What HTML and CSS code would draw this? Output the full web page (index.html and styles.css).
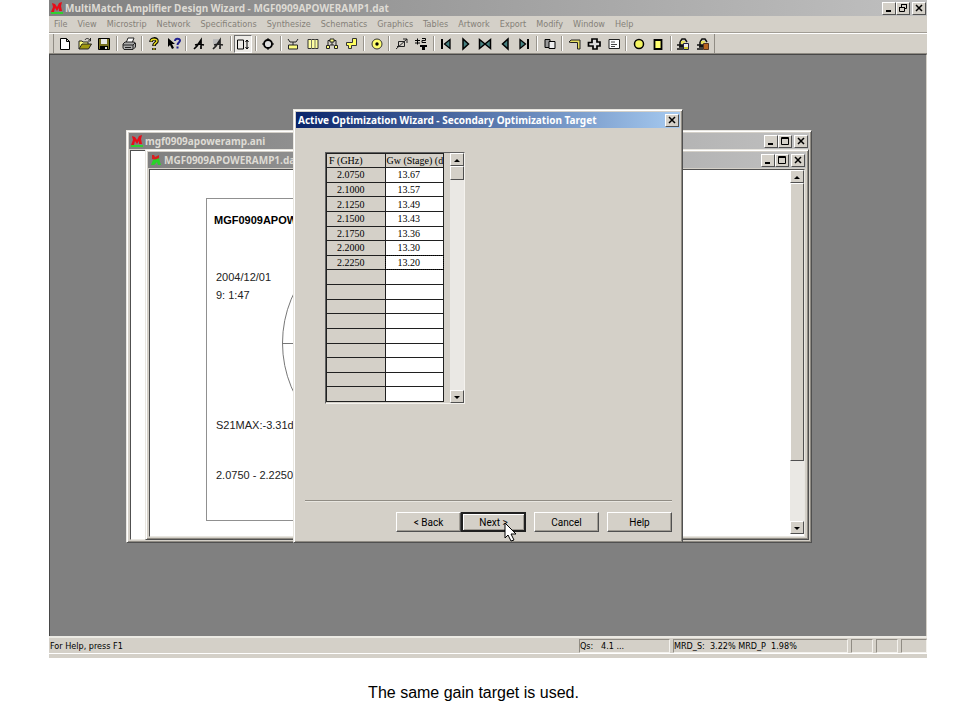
FILE: index.html
```
<!DOCTYPE html>
<html lang="en">
<head>
    <meta charset="UTF-8">
    <title>MultiMatch Amplifier Design Wizard</title>
    <link rel="stylesheet" href="styles.css">
</head>
<body>
    <div class="app">
        <!-- Main window title -->
        <header class="titlebar main-title">
            <svg class="logo" viewBox="0 0 12 12"><path d="M0 10h12v2H0z" fill="#30d030"/><path d="M1 1l3 1 2 3 2-4 3-1-1 4 1 5H8L8 6 6 9 4 6 3 10H0l2-5z" fill="#e80c18"/></svg>
            <h1>MultiMatch Amplifier Design Wizard - MGF0909APOWERAMP1.dat</h1>
            <div class="win-buttons">
                <button type="button" aria-label="Minimize"><svg viewBox="0 0 10 10"><path d="M2 8h5" stroke="#000" stroke-width="2"/></svg></button>
                <button type="button" aria-label="Restore"><svg viewBox="0 0 10 10"><path d="M3.500 4V1.500h5v4H7M3 1.500h6M1.500 4.500h5v4h-5zM1 4.500h6" fill="none" stroke="#000"/></svg></button>
                <button type="button" class="close" aria-label="Close"><svg viewBox="0 0 10 10"><path d="M2 2l6 6M8 2L2 8" stroke="#000" stroke-width="1.500"/></svg></button>
            </div>
        </header>
        <nav>
            <ul class="menu">
                <li><a href="#">File</a></li>
                <li><a href="#">View</a></li>
                <li><a href="#">Microstrip</a></li>
                <li><a href="#">Network</a></li>
                <li><a href="#">Specifications</a></li>
                <li><a href="#">Synthesize</a></li>
                <li><a href="#">Schematics</a></li>
                <li><a href="#">Graphics</a></li>
                <li><a href="#">Tables</a></li>
                <li><a href="#">Artwork</a></li>
                <li><a href="#">Export</a></li>
                <li><a href="#">Modify</a></li>
                <li><a href="#">Window</a></li>
                <li><a href="#">Help</a></li>
            </ul>
        </nav>
        <div class="toolbar">
            <div class="tools">
                <button type="button" aria-label="New"><svg viewBox="0 0 14 14"><path d="M2.500 1.500h6l3 3v8h-9zM8.500 1.500v3h3" fill="#fff" stroke="#000"/></svg></button>
                <button type="button" aria-label="Open"><svg viewBox="0 0 14 14"><path d="M1 12V4h3l1 1h5v2" fill="#ffff80" stroke="#222"/><path d="M1 12l3-5h9.500l-3 5z" fill="#a09810" stroke="#222"/><path d="M7 3c1-2 3-2 5 0M12.500 1v3H10" fill="none" stroke="#222"/></svg></button>
                <button type="button" aria-label="Save"><svg viewBox="0 0 14 14"><path d="M1.500 1.500h11v11h-11z" fill="#777020" stroke="#000"/><path d="M4 2h6v5H4z" fill="#e8e8e8"/><path d="M3 9h8v4H3z" fill="#000"/><path d="M8 10h2v2H8z" fill="#ddd"/></svg></button>
                <span class="sep"></span>
                <button type="button" aria-label="Print"><svg viewBox="0 0 14 14"><path d="M4 6l2-5h6l-2 5z" fill="#fff" stroke="#222"/><path d="M1 7l2-2h9l1.500 1v4L11 12.500H2L1 11z" fill="#aaa" stroke="#222"/><path d="M1 8h10v4M11 8l2-2M3 10.500h6" fill="none" stroke="#222"/></svg></button>
                <span class="sep"></span>
                <button type="button" aria-label="About"><svg viewBox="0 0 14 14"><path d="M4 5c0-4 6-4 6-1 0 2-3 2-3 5M7 11v2" fill="none" stroke="#000" stroke-width="3.500"/><path d="M4 4.500c0-3 6-3 6-.5 0 2-3 2-3 4.500M7 11.200v1.500" fill="none" stroke="#e8dc20" stroke-width="1.500"/></svg></button>
                <button type="button" aria-label="Context help"><svg viewBox="0 0 14 14"><path d="M1 1v9l2-2 2 4 2-1-2-4h3z" fill="#000"/><path d="M8 4c0-3 5-3 5-.5 0 2-2.500 2-2.500 4.500M10.500 9.500v2" fill="none" stroke="#202090" stroke-width="2"/></svg></button>
                <span class="sep"></span>
                <button type="button" aria-label="Analyze"><svg viewBox="0 0 14 14"><path d="M2 12l3-3 4-6v9M3 8l4-1 5 1" fill="none" stroke="#000" stroke-width="1.700"/></svg></button>
                <button type="button" aria-label="Analyze all"><svg viewBox="0 0 14 14"><path d="M2 2h6v5H2z" fill="#bbb"/><path d="M2 12l3-3 4-6v9M3 8l4-1 5 1" fill="none" stroke="#222" stroke-width="1.700"/></svg></button>
                <span class="sep"></span>
                <button type="button" class="pressed" aria-label="Scale"><svg viewBox="0 0 14 14"><path d="M1.500 3h6v9h-6z" fill="none" stroke="#000"/><path d="M11 3v9M9.500 5L11 3l1.500 2M9.500 10l1.500 2 1.500-2" fill="none" stroke="#000"/></svg></button>
                <span class="sep"></span>
                <button type="button" aria-label="Smith chart"><svg viewBox="0 0 14 14"><circle cx="7" cy="7" r="4" fill="#ddd" stroke="#000" stroke-width="1.800"/><path d="M1 7h2M11 7h2M7 1v2M7 11v2" stroke="#000"/></svg></button>
                <span class="sep"></span>
                <button type="button" aria-label="Device"><svg viewBox="0 0 14 14"><path d="M2 2l2 3h6l2-3M7 5v3" fill="none" stroke="#222"/><path d="M2.500 8h9v4h-9z" fill="#ffff80" stroke="#222"/></svg></button>
                <button type="button" aria-label="Layout"><svg viewBox="0 0 14 14"><path d="M2 2.500h10v9H2z" fill="#ffffa0" stroke="#333"/><path d="M5.500 2v10M9 2v10" stroke="#776"/></svg></button>
                <button type="button" aria-label="Tree"><svg viewBox="0 0 14 14"><path d="M5 3.500H3v5M9 3.500h2v5M7 5v3" fill="none" stroke="#222"/><path d="M5 2h4v3H5zM1.500 8.500h3v3h-3zM9.500 8.500h3v3h-3z" fill="#ffff80" stroke="#222"/><path d="M5 8h4" stroke="#222"/></svg></button>
                <button type="button" aria-label="Step"><svg viewBox="0 0 14 14"><path d="M7.500 1.500h4v7h-5v3h-3v-3h-2v-3h6z" fill="#ffff60" stroke="#333"/></svg></button>
                <span class="sep"></span>
                <button type="button" aria-label="Target"><svg viewBox="0 0 14 14"><circle cx="7" cy="7" r="5" fill="#ffff70" stroke="#333"/><circle cx="7" cy="7" r="1.700"/></svg></button>
                <span class="sep"></span>
                <button type="button" aria-label="Tune"><svg viewBox="0 0 14 14"><path d="M3.500 4.500h6v5h-6zM1 12l11-10M8 2h4v4M2 9.500h3" fill="none" stroke="#222"/></svg></button>
                <button type="button" aria-label="Optimize"><svg viewBox="0 0 14 14"><path d="M1 3.500h5M1 6h5M3.500 1.500v6M8 1.500h3.500v2H8v2h4" fill="none" stroke="#000"/><path d="M6 8h7v2h-2v3H8v-3H6z"/></svg></button>
                <span class="sep"></span>
                <button type="button" aria-label="First"><svg viewBox="0 0 14 14"><path d="M3 2v10" stroke="#000" stroke-width="2"/><path d="M11 2.500v9L5.500 7z" fill="#468080" stroke="#000" stroke-width="1.300"/></svg></button>
                <button type="button" aria-label="Forward"><svg viewBox="0 0 14 14"><path d="M4 2v10l5.500-5z" fill="#468080" stroke="#000" stroke-width="1.500"/></svg></button>
                <button type="button" aria-label="Centre"><svg viewBox="0 0 14 14"><path d="M1.500 2.500v9L7 7zM12.500 2.500v9L7 7z" fill="#468080" stroke="#000" stroke-width="1.500"/></svg></button>
                <button type="button" aria-label="Backward"><svg viewBox="0 0 14 14"><path d="M10 2v10L4.500 7z" fill="#468080" stroke="#000" stroke-width="1.500"/></svg></button>
                <button type="button" aria-label="Last"><svg viewBox="0 0 14 14"><path d="M11 2v10" stroke="#000" stroke-width="2"/><path d="M3 2.500v9L8.500 7z" fill="#468080" stroke="#000" stroke-width="1.300"/></svg></button>
                <span class="sep"></span>
                <button type="button" aria-label="Copy"><svg viewBox="0 0 14 14"><path d="M2 2.500h5v8H2z" fill="#999" stroke="#000"/><path d="M6 4.500h6v7H6z" fill="#eee" stroke="#000"/></svg></button>
                <span class="sep"></span>
                <button type="button" aria-label="Line"><svg viewBox="0 0 14 14"><path d="M1 5l2-2h9v9H9.500V5.500H3z" fill="#e6df60" stroke="#222"/></svg></button>
                <button type="button" aria-label="Junction"><svg viewBox="0 0 14 14"><path d="M5 2h5v3h3v4h-3v3H6V9H1.500V5.500H5z" fill="#ddd" stroke="#000" stroke-width="1.700"/></svg></button>
                <button type="button" aria-label="Properties"><svg viewBox="0 0 14 14"><path d="M2 2.500h10.500v9H2z" fill="#fff" stroke="#222"/><path d="M4 5h4M4 7.500h6M4 9.500h4" stroke="#444"/></svg></button>
                <span class="sep"></span>
                <button type="button" aria-label="Circle"><svg viewBox="0 0 14 14"><circle cx="7" cy="7" r="4.500" fill="#f4f460" stroke="#000" stroke-width="1.500"/></svg></button>
                <button type="button" aria-label="Rectangle"><svg viewBox="0 0 14 14"><path d="M3.500 3h7v9h-7z" fill="#ffff70" stroke="#000" stroke-width="1.800"/></svg></button>
                <span class="sep"></span>
                <button type="button" aria-label="Edit lock"><svg viewBox="0 0 14 14"><path d="M4 5l2-3h3l2 3M1 8h6M3 10h4M1 12h6M4 5v4h4" fill="none" stroke="#111" stroke-width="1.500"/><path d="M5 4h4v3H5z" fill="#e7e060"/><path d="M7.500 6.500h5v6h-5z" fill="#eee" stroke="#224"/><path d="M8 10h4v2H8z" fill="#cc3"/></svg></button>
                <button type="button" aria-label="Edit paste"><svg viewBox="0 0 14 14"><path d="M4 5l2-3h3l2 3M1 8h6M3 10h4M1 12h6M4 5v4h4" fill="none" stroke="#111" stroke-width="1.500"/><path d="M5 4h4v3H5z" fill="#e7e060"/><path d="M7.500 6.500h5v6h-5z" fill="#b86420" stroke="#532"/></svg></button>
            </div>
        </div>

        <main class="desktop">
            <!-- Animation window, mostly covered -->
            <section class="window ani">
                <div class="titlebar">
                    <svg class="logo" viewBox="0 0 12 12"><path d="M0 10h12v2H0z" fill="#30d030"/><path d="M1 1l3 1 2 3 2-4 3-1-1 4 1 5H8L8 6 6 9 4 6 3 10H0l2-5z" fill="#e80c18"/></svg>
                    <h2>mgf0909apoweramp.ani</h2>
                    <div class="win-buttons">
                        <button type="button" aria-label="Minimize"><svg viewBox="0 0 10 10"><path d="M2 8h5" stroke="#000" stroke-width="2"/></svg></button>
                        <button type="button" aria-label="Maximize"><svg viewBox="0 0 10 10"><path d="M1.500 1.500h7v7h-7zM1 2.500h8" fill="none" stroke="#000"/></svg></button>
                        <button type="button" class="close" aria-label="Close"><svg viewBox="0 0 10 10"><path d="M2 2l6 6M8 2L2 8" stroke="#000" stroke-width="1.500"/></svg></button>
                    </div>
                </div>
                <div class="client"></div>
            </section>

            <!-- Data window with the plot -->
            <section class="window dat">
                <div class="titlebar">
                    <svg class="logo" viewBox="0 0 12 12"><path d="M2 1h2l1 2 2-1 2-1v4L6 6 2 5z" fill="#d82020"/><path d="M3 6l4-1 2-1 1 4 1 3H8L7 8l-3 3H1z" fill="#28d428"/></svg>
                    <h2>MGF0909APOWERAMP1.da</h2>
                    <div class="win-buttons">
                        <button type="button" aria-label="Minimize"><svg viewBox="0 0 10 10"><path d="M2 8h5" stroke="#000" stroke-width="2"/></svg></button>
                        <button type="button" aria-label="Maximize"><svg viewBox="0 0 10 10"><path d="M1.500 1.500h7v7h-7zM1 2.500h8" fill="none" stroke="#000"/></svg></button>
                        <button type="button" class="close" aria-label="Close"><svg viewBox="0 0 10 10"><path d="M2 2l6 6M8 2L2 8" stroke="#000" stroke-width="1.500"/></svg></button>
                    </div>
                </div>
                <div class="client">
                    <div class="sheet">
                        <div class="plot">
                            <svg class="smith" viewBox="0 0 230 230"><circle cx="115" cy="115" r="114.500" fill="none" stroke="#777"/><path d="M0 115.500h230" stroke="#777"/></svg>
                            <h3>MGF0909APOW</h3>
                            <p class="date">2004/12/01<br>9: 1:47</p>
                            <p class="gain">S21MAX:-3.31d</p>
                            <p class="range">2.0750 - 2.2250</p>
                        </div>
                    </div>
                    <div class="scrollbar">
                        <button type="button" aria-label="Scroll up"><svg viewBox="0 0 10 10"><path d="M2 7l3-3 3 3z"/></svg></button>
                        <div class="thumb"></div>
                        <button type="button" class="down" aria-label="Scroll down"><svg viewBox="0 0 10 10"><path d="M2 4l3 3 3-3z"/></svg></button>
                    </div>
                </div>
            </section>

            <!-- Wizard dialog -->
            <section class="window dialog">
                <div class="titlebar active">
                    <h2>Active Optimization Wizard - Secondary Optimization Target</h2>
                    <div class="win-buttons">
                        <button type="button" class="close" aria-label="Close"><svg viewBox="0 0 10 10"><path d="M2 2l6 6M8 2L2 8" stroke="#000" stroke-width="1.500"/></svg></button>
                    </div>
                </div>
                <div class="dialog-body">
                    <div class="grid">
                        <table>
                            <thead>
                                <tr><th>F (GHz)</th><th>Gw (Stage) (d</th></tr>
                            </thead>
                            <tbody>
                                <tr><td>2.0750</td><td>13.67</td></tr>
                                <tr><td>2.1000</td><td>13.57</td></tr>
                                <tr><td>2.1250</td><td>13.49</td></tr>
                                <tr><td>2.1500</td><td>13.43</td></tr>
                                <tr><td>2.1750</td><td>13.36</td></tr>
                                <tr><td>2.2000</td><td>13.30</td></tr>
                                <tr><td>2.2250</td><td class="selected">13.20</td></tr>
                                <tr><td></td><td></td></tr>
                                <tr><td></td><td></td></tr>
                                <tr><td></td><td></td></tr>
                                <tr><td></td><td></td></tr>
                                <tr><td></td><td></td></tr>
                                <tr><td></td><td></td></tr>
                                <tr><td></td><td></td></tr>
                                <tr><td></td><td></td></tr>
                                <tr><td></td><td></td></tr>
                            </tbody>
                        </table>
                        <div class="scrollbar small-thumb">
                            <button type="button" aria-label="Scroll up"><svg viewBox="0 0 10 10"><path d="M2 7l3-3 3 3z"/></svg></button>
                            <div class="thumb"></div>
                            <button type="button" class="down" aria-label="Scroll down"><svg viewBox="0 0 10 10"><path d="M2 4l3 3 3-3z"/></svg></button>
                        </div>
                    </div>
                    <div class="dialog-buttons">
                        <div class="pair">
                            <button type="button">&lt; Back</button>
                            <button type="button" class="default">Next &gt;</button>
                        </div>
                        <button type="button">Cancel</button>
                        <button type="button">Help</button>
                    </div>
                </div>
                <svg class="cursor" viewBox="0 0 13 20"><path d="M1 1v15l3-3 3 6 3-1-3-6h5z" fill="#fff" stroke="#000"/></svg>
            </section>
        </main>

        <footer class="statusbar">
            <span class="hint">For Help, press F1</span>
            <span class="panel qs">Qs: &nbsp; 4.1 ...</span>
            <span class="panel mrd">MRD_S: &nbsp;3.22% MRD_P &nbsp;1.98%</span>
            <span class="panel"></span>
            <span class="panel"></span>
            <span class="panel last"></span>
        </footer>
    </div>
    <p class="caption">The same gain target is used.</p>
</body>
</html>
```
FILE: styles.css
```
* {
    box-sizing: border-box;
}
body {
    background-color: #fff;
    display: flex;
    flex-direction: column;
    font-family: "DejaVu Sans Condensed", "DejaVu Sans", sans-serif;
    font-size: 9px;
    margin: 0;
    min-height: 100vh;
}
h1, h2, h3, p, ul {
    margin: 0;
    padding: 0;
}
button {
    background-color: #d4d0c8;
    border: 0;
    color: #000;
    font: inherit;
    padding: 0;
}
svg {
    display: block;
}
.app {
    background-color: #d4d0c8;
    display: flex;
    flex: 1;
    flex-direction: column;
    margin: 0 33px 0 49px;
}
/* Title bars */
.titlebar {
    align-items: center;
    background: linear-gradient(to right, #808080, #c0c0c0);
    color: #dedbd4;
    display: flex;
    height: 16px;
    padding: 0 1px 0 2px;
}
.titlebar h1, .titlebar h2 {
    flex: 1;
    font-family: "Noto Sans", "Open Sans", sans-serif;
    font-size: 10px;
    font-weight: bold;
    line-height: 16px;
    overflow: hidden;
    white-space: nowrap;
}
.titlebar.active {
    background: linear-gradient(to right, #0a246a, #a6caf0);
    color: #fff;
}
.logo {
    height: 12px;
    margin-right: 2px;
    width: 12px;
}
.win-buttons {
    display: flex;
}
.win-buttons button, .scrollbar button, .thumb {
    align-items: center;
    background-color: #d4d0c8;
    border: 1px solid;
    border-color: #fff #505050 #505050 #fff;
    display: flex;
    height: 13px;
    justify-content: center;
    width: 14px;
}
.win-buttons svg, .scrollbar svg {
    height: 10px;
    width: 10px;
}
.win-buttons .close {
    margin-left: 2px;
}
/* Menu and toolbar */
.menu {
    align-items: center;
    border-bottom: 1px solid #a09c94;
    display: flex;
    gap: 10px;
    height: 17px;
    list-style: none;
    padding: 0 5px;
}
.menu a {
    color: #848078;
    text-decoration: none;
}
.toolbar {
    border-bottom: 1px solid #908c84;
    border-top: 1px solid #fff;
    height: 21px;
    padding-left: 4px;
}
.tools {
    align-items: center;
    border-left: 1px solid #908c84;
    border-right: 1px solid #908c84;
    display: flex;
    height: 19px;
    justify-content: space-between;
    max-width: 662px;
    padding: 0 2px;
}
.tools button {
    align-items: center;
    display: flex;
    height: 18px;
    justify-content: center;
    width: 18px;
}
.tools svg {
    height: 14px;
    width: 14px;
}
.tools .pressed {
    background-color: #eceae6;
    border: 1px solid;
    border-color: #707070 #fff #fff #707070;
}
.sep {
    background: linear-gradient(to right, transparent 1px, #98948c 1px, #98948c 2px, #fff 2px, #fff 3px, transparent 3px);
    height: 15px;
    width: 4px;
}
/* Desktop with the child windows */
.desktop {
    background-color: #808080;
    border: 1px solid #484848;
    border-bottom: 0;
    border-right-color: #d4d0c8;
    flex: 1;
    min-height: 500px;
    position: relative;
}
.window {
    background-color: #d4d0c8;
    border: 1px solid;
    border-color: #e8e6e0 #505050 #505050 #e8e6e0;
    box-shadow: inset 1px 1px #fff, inset -1px -1px #908c84;
    display: flex;
    flex-direction: column;
    padding: 2px;
    position: absolute;
}
.ani {
    height: 413px;
    left: 76px;
    top: 75px;
    width: 686px;
}
.dat {
    height: 391px;
    left: 95px;
    top: 94px;
    width: 664px;
}
.dialog {
    height: 434px;
    left: 243px;
    top: 54px;
    width: 390px;
}
.client {
    background-color: #fff;
    border: 1px solid;
    border-color: #505050 #e8e6e0 #e8e6e0 #505050;
    display: flex;
    flex: 1;
    margin: 1px 1px 0;
    min-height: 0;
}
.dat .client {
    padding-bottom: 2px;
}
.sheet {
    flex: 1;
    overflow: hidden;
    padding: 28px 136px 12px 56px;
}
/* Plot sheet */
.plot {
    border: 1px solid #909090;
    color: #222;
    font-family: "Liberation Sans", Arial, sans-serif;
    font-size: 11px;
    height: 323px;
    line-height: 18px;
    padding: 12px 7px;
    position: relative;
}
.plot h3 {
    color: #000;
    font-size: 11px;
}
.plot p {
    margin-left: 2px;
}
.plot .date {
    margin-top: 39px;
}
.plot .gain {
    margin-top: 112px;
}
.plot .range {
    margin-top: 32px;
}
.smith {
    height: 230px;
    left: 75px;
    position: absolute;
    top: 29px;
    width: 230px;
}
/* Scrollbars */
.scrollbar {
    background-color: #eae8e4;
    display: flex;
    flex-direction: column;
    width: 14px;
}
.scrollbar .thumb {
    height: 278px;
}
.scrollbar .down {
    margin-top: auto;
}
.small-thumb .thumb {
    height: 14px;
}
/* Wizard dialog */
.dialog-body {
    display: flex;
    flex: 1;
    flex-direction: column;
    justify-content: space-between;
    padding: 24px 8px 8px 9px;
}
.grid {
    align-self: flex-start;
    border: 1px solid;
    border-color: #606060 #f4f2ee #f4f2ee #606060;
    display: flex;
    gap: 6px;
    height: 252px;
    margin-left: 20px;
}
table {
    align-self: flex-start;
    border-collapse: collapse;
    border-left: 1px solid #606060;
    font-family: "Liberation Serif", "Times New Roman", serif;
    font-size: 10px;
    height: 249px;
    line-height: 13px;
    table-layout: fixed;
    width: 118px;
}
th, td {
    background-color: #d4d0c8;
    border: 1px solid #202020;
    font-weight: normal;
    height: 14px;
    padding: 0;
    white-space: nowrap;
}
th {
    overflow: hidden;
    padding-left: 2px;
    text-align: left;
}
th:last-child {
    padding-left: 1px;
}
td {
    padding-left: 10px;
    text-align: left;
}
td:last-child {
    background-color: #fff;
    padding-left: 12px;
}
td.selected {
    outline: 1px dotted #000;
    outline-offset: -1px;
}
.dialog-buttons {
    border-top: 1px solid #908c84;
    box-shadow: inset 0 1px #e8e6e0;
    display: flex;
    gap: 8px;
    justify-content: flex-end;
    padding-top: 11px;
}
.pair {
    display: flex;
}
.dialog-buttons button {
    border: 1px solid;
    border-color: #fff #505050 #505050 #fff;
    box-shadow: inset -1px -1px #a09c94;
    font-family: Roboto, sans-serif;
    font-size: 10px;
    height: 20px;
    width: 65px;
}
.dialog-buttons .default {
    border: 2px solid #202020;
    box-shadow: inset 1px 1px #fff, inset -1px -1px #a09c94;
}
.cursor {
    height: 20px;
    left: 210px;
    position: absolute;
    top: 412px;
    width: 13px;
}
/* Status bar */
.statusbar {
    border-top: 2px solid #eceae4;
    box-shadow: inset 0 -4px #d4d0c8, inset 0 -5px #fff;
    display: flex;
    gap: 3px;
    height: 22px;
    line-height: 12px;
    padding: 1px 0 5px;
}
.hint {
    flex: 1;
    padding: 1px;
}
.panel {
    border: 1px solid;
    border-color: #908c84 #f4f2ee #f4f2ee #908c84;
    white-space: pre;
    width: 22px;
}
.qs {
    width: 91px;
}
.mrd {
    width: 175px;
}
.last {
    width: 26px;
}
.caption {
    font-family: "Liberation Sans", Arial, sans-serif;
    font-size: 16px;
    line-height: 20px;
    padding: 25px 13px 17px 0;
    text-align: center;
}
```
